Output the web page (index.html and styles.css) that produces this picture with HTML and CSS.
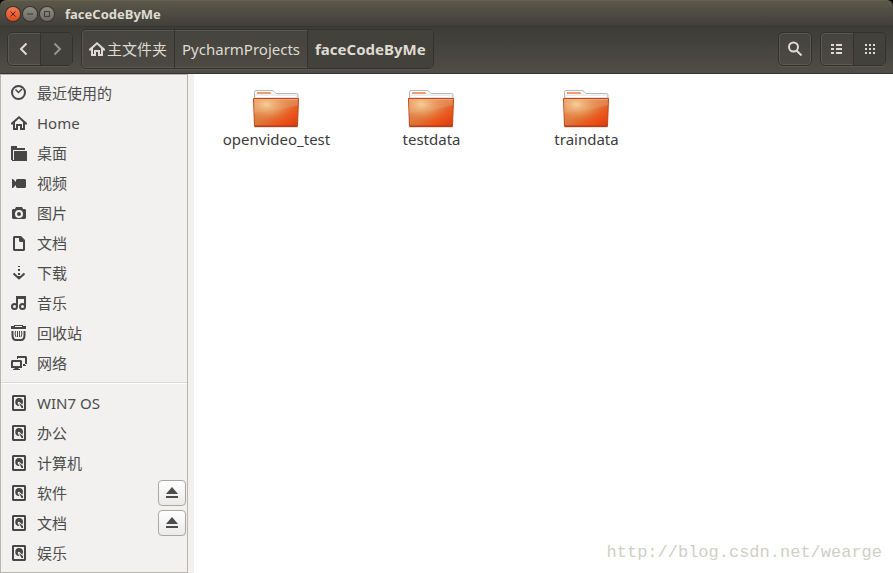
FILE: index.html
```html
<!DOCTYPE html>
<html lang="zh-CN">
<head>
<meta charset="utf-8">
<title>faceCodeByMe</title>
<link rel="stylesheet" href="styles.css">
</head>
<body>
<svg class="defs" aria-hidden="true">
  <defs>
    <linearGradient id="front" x1="0" y1="0" x2="1" y2="1">
      <stop offset="0" stop-color="#e58a5c"/><stop offset=".45" stop-color="#dc7c3c"/><stop offset=".75" stop-color="#ec5119"/><stop offset="1" stop-color="#d03d10"/>
    </linearGradient>
    <radialGradient id="glow" cx=".28" cy=".2" r=".65">
      <stop offset="0" stop-color="#f6cf98"/><stop offset=".5" stop-color="#eda266" stop-opacity=".65"/><stop offset="1" stop-color="#e8743c" stop-opacity="0"/>
    </radialGradient>
    <linearGradient id="paper" x1="0" y1="0" x2="0" y2="1">
      <stop offset="0" stop-color="#fff"/><stop offset="1" stop-color="#dcdcdc"/>
    </linearGradient>
  </defs>
  <symbol id="house" viewBox="0 0 16 16">
    <path d="M8 1 0 8v1.500h2V15h5v-4h2v4h5V9.500h2V8zM8 3.600 12 7.200V13h-1V9H5v4H4V7.200z" fill-rule="evenodd"/>
  </symbol>
  <symbol id="disk" viewBox="0 0 16 16">
    <path fill-rule="evenodd" d="M2 0h12l1 1v14l-1 1H2l-1-1V1zM3 2v12h10V2z"/>
    <path fill-rule="evenodd" d="M8 3a4 4 0 0 1 4 4c0 1-.3 1.700-.8 2.400L9 7.600A1.200 1.200 0 1 0 7.200 9l1.300 2A4 4 0 1 1 8 3z"/>
    <path d="m8 8 4 3v2h-1.500z"/>
  </symbol>
  <symbol id="folder" viewBox="1 0 48 40">
    <path d="M2 37h44v2H2z" fill="#000" opacity=".12"/>
    <path d="M2.500 12V3q0-1.500 1.500-1.500h16q1 0 2 1L24 4.500h20.500q1.500 0 1.500 1.500V12z" fill="url(#paper)" stroke="#b9b9b9"/>
    <path d="M5 3h13l1.500 2H5z" fill="#ee9c70"/>
    <path d="M4 7.500h40" stroke="#fff"/>
    <path d="M1.500 9.500h45L45.500 37q0 .5-.5.500H3q-.5 0-.5-.5z" fill="url(#front)" stroke="#bd4517"/>
    <path d="M2 10h44v6Q27 22 2 24z" fill="#fff" opacity=".14"/>
    <path d="M2 10h44l-1 27H3z" fill="url(#glow)"/>
    <path d="M2 10.500h44" stroke="#f3b38b" opacity=".7"/>
    <path d="M3 37h42" stroke="#b73613"/>
  </symbol>
  <symbol id="eject" viewBox="0 0 14 12">
    <path d="M7 0 13 7H1zM1 9h12v2H1z"/>
  </symbol>
</svg>

<div class="window">
  <header class="chrome">
    <div class="titlebar">
      <button class="wm close" aria-label="关闭"><svg viewBox="0 0 14 14"><path d="m4.500 4.500 5 5m0-5-5 5"/></svg></button>
      <button class="wm" aria-label="最小化"><svg viewBox="0 0 14 14"><path d="M4 7h6"/></svg></button>
      <button class="wm" aria-label="最大化"><svg viewBox="0 0 14 14"><path d="M4.500 4.500h5v5h-5z"/></svg></button>
      <h1>faceCodeByMe</h1>
    </div>
    <div class="toolbar">
      <div class="group nav">
        <button aria-label="后退"><svg class="icon" viewBox="0 0 16 16"><path class="line" d="m10.500 2.500-5.500 5.500 5.500 5.500"/></svg></button>
        <button class="pressed dim" aria-label="前进"><svg class="icon" viewBox="0 0 16 16"><path class="line" d="m5.500 2.500 5.500 5.500-5.500 5.500"/></svg></button>
      </div>
      <nav class="group path">
        <button><svg class="icon"><use href="#house"/></svg><span>主文件夹</span></button>
        <button>PycharmProjects</button>
        <button class="pressed current">faceCodeByMe</button>
      </nav>
      <div class="group search">
        <button aria-label="搜索"><svg class="icon" viewBox="0 0 16 16"><circle class="line" cx="6.500" cy="6" r="4.500"/><path class="line" d="m9.500 9.500 5 5"/></svg></button>
      </div>
      <div class="group views">
        <button aria-label="列表"><svg class="icon" viewBox="0 0 16 16"><path d="M2 3h3v2H2zm5 0h6v2H7zM2 7h3v2H2zm5 0h6v2H7zM2 11h3v2H2zm5 0h6v2H7z"/></svg></button>
        <button class="pressed" aria-label="图标"><svg class="icon" viewBox="0 0 16 16"><path d="M3 3h2v2H3zm4 0h2v2H7zm4 0h2v2h-2zM3 7h2v2H3zm4 0h2v2H7zm4 0h2v2h-2zM3 11h2v2H3zm4 0h2v2H7zm4 0h2v2h-2z"/></svg></button>
      </div>
    </div>
  </header>

  <div class="body">
    <aside class="sidebar">
      <ul>
        <li><a href="#"><svg class="icon" viewBox="0 0 16 16"><circle class="line" cx="7.500" cy="7.500" r="6.500"/><path class="check" d="m4.500 4.500 3 3 3.500-3.500"/></svg>最近使用的</a></li>
        <li><a href="#"><svg class="icon"><use href="#house"/></svg>Home</a></li>
        <li><a href="#"><svg class="icon" viewBox="0 0 16 16"><path d="M0 1h6v2h8v2H2v10H0z"/><path d="M3 6h13v10H1v-1h2z"/></svg>桌面</a></li>
        <li><a href="#"><svg class="icon" viewBox="0 0 16 16"><path d="M1 4h1l3 3V5l1-1h8l1 1v7l-1 1H6l-1-1v-2l-3 3H1z"/></svg>视频</a></li>
        <li><a href="#"><svg class="icon" viewBox="0 0 16 16"><path fill-rule="evenodd" d="M5 2h6l1 2h2l1 1v8l-1 1H2l-1-1V5l1-1h2zM8 5a4 4 0 1 0 0 8 4 4 0 0 0 0-8z"/><circle cx="8" cy="9" r="2"/></svg>图片</a></li>
        <li><a href="#"><svg class="icon" viewBox="0 0 16 16"><path fill-rule="evenodd" d="M3 1h7l4 4v10l-1 1H3l-1-1V2zM4 3v11h8V7H9L8 6V3z"/></svg>文档</a></li>
        <li><a href="#"><svg class="icon" viewBox="0 0 16 16"><path d="M7 1h2v1H7zm0 3h2v2H7zm0 4h2v2H7zm0 3h2v3H7z"/><path class="line" d="m2.500 8.500 5.500 5 5.500-5"/></svg>下载</a></li>
        <li><a href="#"><svg class="icon" viewBox="0 0 16 16"><circle class="line" cx="3.500" cy="11.500" r="2.500"/><circle class="line" cx="11.500" cy="11.500" r="2.500"/><path class="line" d="M6 12V3h8v9"/><path d="M5 1h10v3H5z"/></svg>音乐</a></li>
        <li><a href="#"><svg class="icon" viewBox="0 0 16 16"><path fill-rule="evenodd" d="M3 0h9v1h3v3H0V1h3zM4 1v1h7V1z"/><path class="line" d="M1.500 6v4q0 5 3.500 5h5q3.500 0 3.500-5V6"/><path class="thin" d="M4.500 6q-1 3 .5 6M6.500 6v6M8.500 6v6M10.500 6q1 3-.5 6"/></svg>回收站</a></li>
        <li><a href="#"><svg class="icon" viewBox="0 0 16 16"><path fill-rule="evenodd" d="M1 5h9l1 1v7H7.500v1H9v1H2v-1h1.500v-1H0V6zM2 7v4h7V7z"/><path d="M6 1h9l1 1v7h-2v1h1v1h-3V9h2V3H7v1H6z"/></svg>网络</a></li>
      </ul>
      <ul class="devices">
        <li><a href="#"><svg class="icon"><use href="#disk"/></svg>WIN7 OS</a></li>
        <li><a href="#"><svg class="icon"><use href="#disk"/></svg>办公</a></li>
        <li><a href="#"><svg class="icon"><use href="#disk"/></svg>计算机</a></li>
        <li><a href="#"><svg class="icon"><use href="#disk"/></svg>软件</a><button class="eject" aria-label="弹出软件"><svg><use href="#eject"/></svg></button></li>
        <li><a href="#"><svg class="icon"><use href="#disk"/></svg>文档</a><button class="eject" aria-label="弹出文档"><svg><use href="#eject"/></svg></button></li>
        <li><a href="#"><svg class="icon"><use href="#disk"/></svg>娱乐</a></li>
      </ul>
    </aside>
    <main class="files">
      <a class="file" href="#"><svg><use href="#folder"/></svg>openvideo_test</a>
      <a class="file" href="#"><svg><use href="#folder"/></svg>testdata</a>
      <a class="file" href="#"><svg><use href="#folder"/></svg>traindata</a>
    </main>
  </div>
  <p class="watermark">http://blog.csdn.net/wearge</p>
</div>
</body>
</html>
```
FILE: styles.css
```css
* { box-sizing: border-box; }
body {
  margin: 0;
  background: #fff;
  color: #3c3c3c;
  font: 15px/20px "Noto Sans", "Noto Sans CJK SC", sans-serif;
}
button { margin: 0; padding: 0; border: 0; background: none; color: inherit; font: inherit; }
a { color: inherit; text-decoration: none; }
ul { margin: 0; padding: 0; list-style: none; }
svg { display: block; flex: none; fill: currentColor; }
.defs { position: absolute; width: 0; height: 0; }
.icon { width: 16px; height: 16px; }
.line { fill: none; stroke: currentColor; stroke-width: 2; }
.thin, .check { fill: none; stroke: currentColor; stroke-width: 1; }
.check { stroke-width: 1.5; }

.window { position: relative; display: flex; flex-direction: column; min-height: 100vh; }

.chrome { background: #000; color: #dfdbd2; }
.titlebar {
  display: flex;
  align-items: center;
  gap: 3px;
  height: 26px;
  padding: 0 6px;
  border-radius: 6px 6px 0 0;
  border-top: 1px solid #65614f;
  background: linear-gradient(#5b584a, #403f3a);
}
.titlebar h1 { margin: 0 0 0 8px; font-size: 13px; line-height: 20px; font-weight: 700; }
.wm {
  width: 14px;
  height: 14px;
  border-radius: 50%;
  background: linear-gradient(#8e8b83, #6d6b64);
  box-shadow: 0 0 0 1px #35342f;
  color: #3c3b37;
}
.wm svg { width: 14px; height: 14px; fill: none; stroke: currentColor; }
.close { background: linear-gradient(#f47b55, #df4a1b); color: #5a1f0c; }

.toolbar {
  display: flex;
  align-items: center;
  gap: 8px;
  height: 48px;
  padding: 0 7px 2px;
  border-top: 1px solid #373632;
  border-bottom: 1px solid #34332f;
  background: linear-gradient(#3d3c38, #504d46);
}
.group {
  display: flex;
  height: 34px;
  border: 1px solid #33322e;
  border-radius: 5px;
  background: linear-gradient(#46443e, #4b4942);
  box-shadow: inset 0 0 0 1px #5a574e, 0 1px #5a574e;
}
.group button {
  display: flex;
  align-items: center;
  justify-content: center;
  gap: 2px;
  min-width: 32px;
}
.group button + button { border-left: 1px solid #33322e; }
.group .pressed { border-radius: 0 4px 4px 0; background: #42413b; }
.dim { color: #98958c; }
.path { height: 40px; }
.path button { padding: 0 7px; }
.path .current { font-weight: 700; }
.search { margin-left: auto; }

.body { display: flex; flex: 1; background: #f2f1f0; }
.sidebar {
  width: 188px;
  padding: 3px 0;
  border: 1px solid #b9b4ae;
  background: #f2f1f0;
  color: #4c4c4c;
}
.sidebar li { display: flex; align-items: center; height: 30px; padding-right: 1px; }
.sidebar a { display: flex; flex: 1; align-items: center; gap: 10px; padding-left: 10px; }
.sidebar .icon { color: #464646; }
.devices { margin-top: 4px; padding-top: 5px; border-top: 1px solid #d9d6d3; box-shadow: inset 0 1px #fff; }
.sidebar .eject {
  display: grid;
  place-items: center;
  width: 28px;
  height: 26px;
  border: 1px solid #aaa7a3;
  border-radius: 4px;
  background: linear-gradient(#fff, #ebeae9);
}
.eject svg { width: 14px; height: 12px; }

.files {
  display: flex;
  flex: 1;
  flex-wrap: wrap;
  align-content: flex-start;
  margin-left: 6px;
  padding: 15px 5px;
  background: #fff;
}
.file { display: flex; flex-direction: column; align-items: center; width: 155px; }
.file svg { width: 48px; height: 40px; }

.watermark {
  position: absolute;
  right: 11px;
  bottom: 10px;
  margin: 0;
  color: #cfcfc6;
  font: 17px/20px "Liberation Mono", monospace;
}
```
